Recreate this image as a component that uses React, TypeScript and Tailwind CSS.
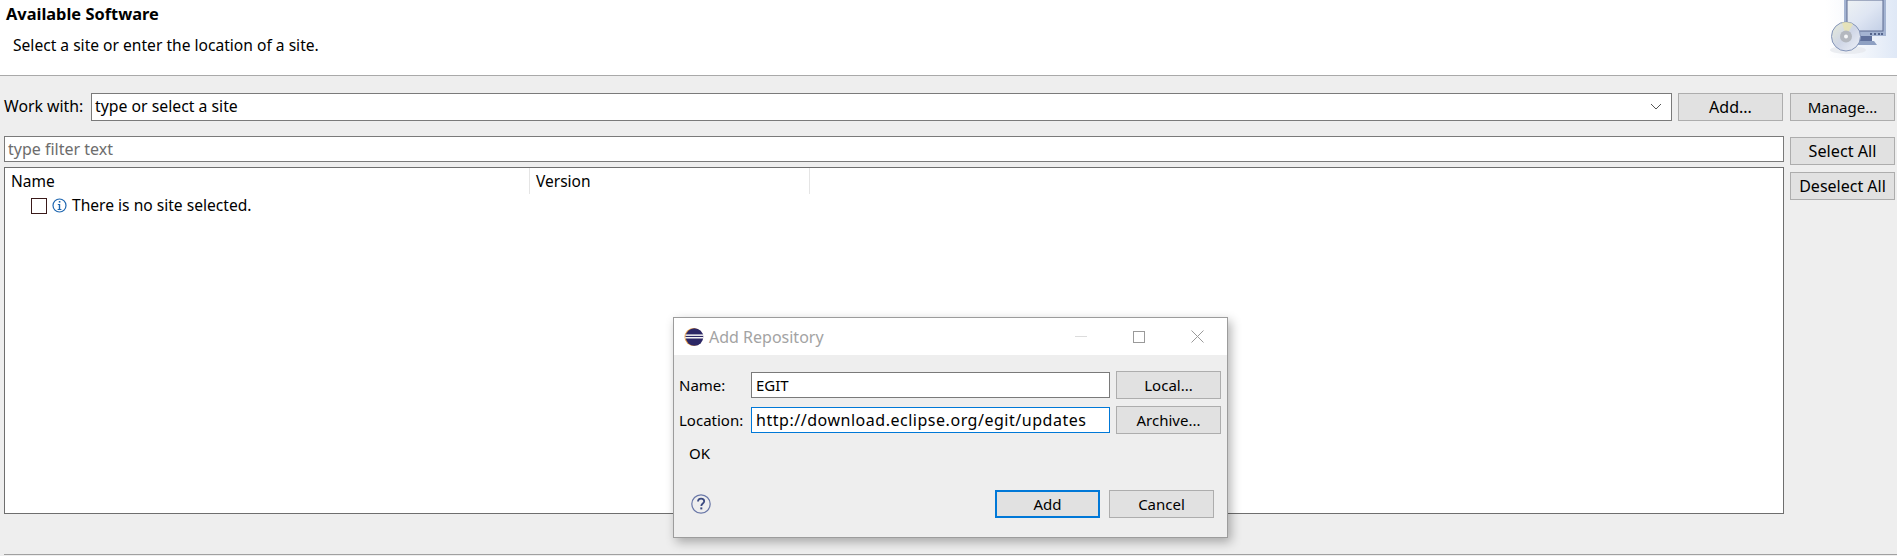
import React from "react";

function Btn({ children, primary = false, className = "" }: { children: React.ReactNode; primary?: boolean; className?: string }) {
  return (
    <div
      className={`flex h-[28px] w-[105px] shrink-0 items-center justify-center bg-[#e1e1e1] text-[15px] leading-none text-black ${
        primary ? "border-2 border-[#0078d7]" : "border border-[#adadad]"
      } ${className}`}
    >
      {children}
    </div>
  );
}

function InstallArt() {
  return (
    <svg width="71" height="58" viewBox="0 0 71 58" className="block">
      <defs>
        <linearGradient id="bgfade" x1="0" y1="0" x2="1" y2="0">
          <stop offset="0" stopColor="#ffffff" />
          <stop offset="0.55" stopColor="#f1f5fb" />
          <stop offset="1" stopColor="#dfe8f6" />
        </linearGradient>
        <linearGradient id="screen" x1="0" y1="0" x2="1" y2="1">
          <stop offset="0" stopColor="#eef2f4" />
          <stop offset="0.5" stopColor="#dfe6f3" />
          <stop offset="1" stopColor="#c3cfe6" />
        </linearGradient>
        <linearGradient id="disc" x1="0" y1="0" x2="1" y2="1">
          <stop offset="0" stopColor="#e8ecd8" />
          <stop offset="0.5" stopColor="#cfd6e6" />
          <stop offset="1" stopColor="#eef1f8" />
        </linearGradient>
      </defs>
      <rect width="71" height="58" fill="url(#bgfade)" />
      <rect x="18" y="0" width="42" height="36" fill="#a4b4d2" />
      <rect x="21" y="0" width="36" height="31" fill="url(#screen)" stroke="#5c6b90" strokeWidth="1" />
      <g fill="#55658c">
        <rect x="44" y="33" width="2" height="2" />
        <rect x="48" y="33" width="2" height="2" />
        <rect x="52" y="33" width="2" height="2" />
        <rect x="55" y="33" width="2" height="2" />
      </g>
      <rect x="32" y="36" width="14" height="5" fill="#60719c" />
      <path d="M28 45 L30 41 L48 41 L51 45 Z" fill="#8ea0c2" />
      <ellipse cx="22" cy="50" rx="18" ry="4" fill="#e6e8ee" opacity="0.8" />
      <circle cx="20" cy="36.5" r="14.5" fill="url(#disc)" stroke="#8394b8" strokeWidth="1" />
      <path d="M20 36.5 L16 22.5 A14.5 14.5 0 0 1 27 24 Z" fill="#e9e3b0" opacity="0.8" />
      <circle cx="20" cy="36.5" r="6" fill="#b4b8bf" />
      <circle cx="20" cy="36.5" r="2" fill="#f5f6f8" />
    </svg>
  );
}

function EclipseIcon() {
  return (
    <svg width="20" height="20" viewBox="0 0 20 20" className="block">
      <circle cx="9.5" cy="10" r="9" fill="#e39a45" />
      <circle cx="10.5" cy="10" r="8.8" fill="#2c2766" />
      <rect x="1.5" y="7.4" width="18" height="1.5" fill="#f5f5f5" />
      <rect x="1.2" y="10" width="18.3" height="1.5" fill="#f5f5f5" />
    </svg>
  );
}

export default function App() {
  return (
    <div
      className="relative flex h-[556px] w-[1897px] flex-col overflow-hidden bg-[#eeeeee] text-[15.5px] text-black"
      style={{ fontFamily: '"Noto Sans", sans-serif' }}
    >
      {/* Banner */}
      <header className="relative flex h-[75px] shrink-0 justify-between bg-white">
        <div className="pl-[6px] pt-[4px]">
          <h1 className="text-[16.4px] font-bold leading-[20px]">Available Software</h1>
          <p className="pl-[7px] pt-[11px] text-[15.6px] leading-[20px]">Select a site or enter the location of a site.</p>
        </div>
        <InstallArt />
      </header>

      {/* Body */}
      <main className="flex flex-1 flex-col border-t border-[#a9a9a9] pl-[4px] pt-[17px]">
        <div className="flex h-[28px] items-center">
          <span className="w-[87px] shrink-0 leading-none text-[15.8px]">Work with:</span>
          <div className="flex h-[28px] w-[1581px] items-center justify-between border border-[#7a7a7a] bg-white pl-[3px] pr-[9px]">
            <span className="text-[15.8px]">type or select a site</span>
            <svg width="12" height="8" viewBox="0 0 12 8" className="block">
              <path d="M1 1 L6 6 L11 1" fill="none" stroke="#555" strokeWidth="1" />
            </svg>
          </div>
          <Btn className="ml-[6px] text-[16px]">Add...</Btn>
          <Btn className="ml-[7px]">Manage...</Btn>
        </div>

        <div className="mt-[15px] flex">
          <div className="flex w-[1780px] flex-col">
            <div className="flex h-[26px] items-center border border-[#7a7a7a] bg-white pl-[3px] text-[16px] text-[#6d6d6d]">type filter text</div>
            <div className="mt-[5px] h-[347px] border border-[#6e6e6e] bg-white">
              <div className="flex h-[26px] text-black">
                <div className="flex w-[525px] items-center border-r border-[#e5e5e5] pl-[6px] pt-px">Name</div>
                <div className="flex w-[280px] items-center border-r border-[#e5e5e5] pl-[6px] pt-px">Version</div>
              </div>
              <div className="flex h-[24px] items-center pl-[26px]">
                <div className="h-[16px] w-[16px] border border-[#3a1a1a] bg-white" />
                <svg width="15" height="15" viewBox="0 0 15 15" className="ml-[5px] block -translate-y-px">
                  <circle cx="7.5" cy="7.5" r="6.5" fill="#fff" stroke="#1e66b0" strokeWidth="1.2" />
                  <rect x="6.8" y="3" width="1.6" height="1.6" fill="#1e66b0" />
                  <path d="M5.8 6 H8.2 V11 H9.4 V12 H5.6 V11 H6.8 V7 H5.8 Z" fill="#1e66b0" />
                </svg>
                <span className="ml-[5px] text-[15.6px] leading-none">There is no site selected.</span>
              </div>
            </div>
          </div>
          <div className="ml-[6px] mt-[1px] flex flex-col gap-[7px]">
            <Btn className="text-[16.2px]">Select All</Btn>
            <Btn className="text-[16px]">Deselect All</Btn>
          </div>
        </div>

        <div className="mt-[40px] h-px bg-[#a0a0a0]" />
      </main>

      {/* Dialog */}
      <div className="absolute left-[673px] top-[317px] flex h-[221px] w-[555px] flex-col border border-[#9c9c9c] bg-[#eeeeee] shadow-[3px_4px_10px_rgba(0,0,0,0.3)]">
        <div className="flex h-[37px] shrink-0 items-center justify-between bg-white pl-[10px] pr-[23px]">
          <div className="flex items-center gap-[5px]">
            <EclipseIcon />
            <span className="text-[16px] text-[#a3a3a3]">Add Repository</span>
          </div>
          <div className="flex items-center gap-[46px]">
            <svg width="12" height="12" viewBox="0 0 12 12" className="block">
              <path d="M0 5.5 H12" stroke="#dcdcdc" strokeWidth="1" />
            </svg>
            <svg width="12" height="12" viewBox="0 0 12 12" className="block">
              <rect x="0.5" y="0.5" width="11" height="11" fill="none" stroke="#9a9a9a" strokeWidth="1" />
            </svg>
            <svg width="13" height="13" viewBox="0 0 13 13" className="block">
              <path d="M0.5 0.5 L12.5 12.5 M12.5 0.5 L0.5 12.5" stroke="#9a9a9a" strokeWidth="1" />
            </svg>
          </div>
        </div>
        <div className="flex flex-1 flex-col pl-[6px] pr-[6px] pt-[16px]">
          <div className="flex h-[28px] items-center text-[15px]">
            <span className="w-[71px] shrink-0 -translate-x-px">Name:</span>
            <div className="flex h-[26px] w-[359px] items-center border border-[#7a7a7a] bg-white pl-[4px]">EGIT</div>
            <Btn className="ml-[6px]">Local...</Btn>
          </div>
          <div className="mt-[7px] flex h-[28px] items-center text-[15px]">
            <span className="w-[71px] shrink-0 -translate-x-px">Location:</span>
            <div className="flex h-[26px] w-[359px] items-center border border-[#0078d7] bg-white pl-[4px] text-[16px] tracking-[0.525px]">http://download.eclipse.org/egit/updates</div>
            <Btn className="ml-[6px]">Archive...</Btn>
          </div>
          <div className="pl-[9px] pt-[9px] text-[15px] leading-[20px]">OK</div>
          <div className="mt-[27px] flex items-center">
            <svg width="20" height="20" viewBox="0 0 20 20" className="ml-[11px] block">
              <circle cx="10" cy="10" r="9.2" fill="#eeeeee" stroke="#6a78a8" strokeWidth="1.2" />
              <path d="M7 7.6 C7 5.6 8.4 4.6 10.1 4.6 C11.9 4.6 13.2 5.7 13.2 7.3 C13.2 9.5 10.3 9.6 10.3 12" fill="none" stroke="#3b4a80" strokeWidth="1.8" />
              <rect x="9.3" y="13.4" width="2" height="2" fill="#3b4a80" />
            </svg>
            <Btn primary className="ml-[284px]">Add</Btn>
            <Btn className="ml-[9px]">Cancel</Btn>
          </div>
        </div>
      </div>
    </div>
  );
}
